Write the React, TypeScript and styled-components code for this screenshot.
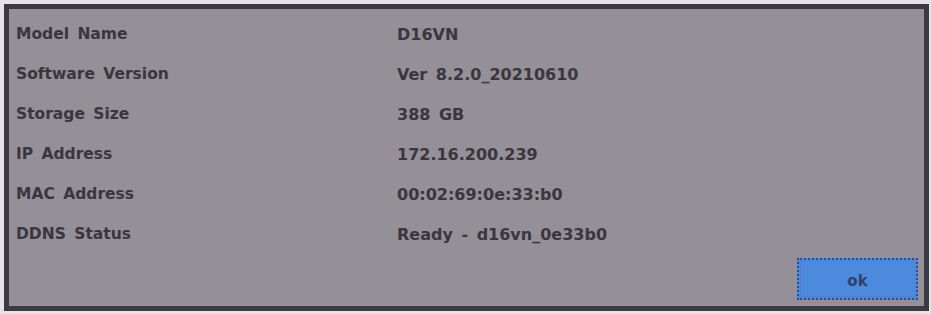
import * as React from 'react';
import styled, { createGlobalStyle } from 'styled-components';

const GlobalStyle = createGlobalStyle`
  html, body {
    margin: 0;
    padding: 0;
    background: #e6e4e9;
  }
  body {
    width: 931px;
    height: 314px;
    overflow: hidden;
  }
`;

const Frame = styled.div`
  box-sizing: border-box;
  margin: 4px 2px 0 4px;
  width: 925px;
  height: 307px;
  border: 5px solid #3c3a42;
  background: #958f98;
  display: flex;
  flex-direction: column;
  font-family: 'DejaVu Sans', Verdana, sans-serif;
  font-weight: bold;
  color: #3a3640;
`;

const InfoList = styled.div`
  display: flex;
  flex-direction: column;
  padding: 5px 0 0 7px;
`;

const Row = styled.div`
  display: grid;
  grid-template-columns: 381px 1fr;
  align-items: center;
  height: 40px;
  word-spacing: 3px;
`;

const Label = styled.span`
  white-space: nowrap;
  font-size: 15.5px;
`;

const Value = styled.span`
  white-space: nowrap;
  font-size: 16px;
`;

const Footer = styled.div`
  margin-top: auto;
  display: flex;
  justify-content: flex-end;
  padding: 0 6px 6px 0;
`;

const OkButton = styled.button`
  box-sizing: border-box;
  width: 121px;
  height: 42px;
  background: #4c8ade;
  border: 2px dotted #2c4c8c;
  outline: 1px solid #5a7fc0;
  outline-offset: -4px;
  font-family: 'DejaVu Sans', Verdana, sans-serif;
  font-weight: bold;
  font-size: 15px;
  color: #2f4266;
  padding: 3px 0 0;
  cursor: pointer;
`;

const rows: [string, string][] = [
  ['Model Name', 'D16VN'],
  ['Software Version', 'Ver 8.2.0_20210610'],
  ['Storage Size', '388 GB'],
  ['IP Address', '172.16.200.239'],
  ['MAC Address', '00:02:69:0e:33:b0'],
  ['DDNS Status', 'Ready - d16vn_0e33b0'],
];

export default function App() {
  return (
    <>
      <GlobalStyle />
      <Frame>
        <InfoList>
          {rows.map(([label, value]) => (
            <Row key={label}>
              <Label>{label}</Label>
              <Value>{value}</Value>
            </Row>
          ))}
        </InfoList>
        <Footer>
          <OkButton>ok</OkButton>
        </Footer>
      </Frame>
    </>
  );
}
